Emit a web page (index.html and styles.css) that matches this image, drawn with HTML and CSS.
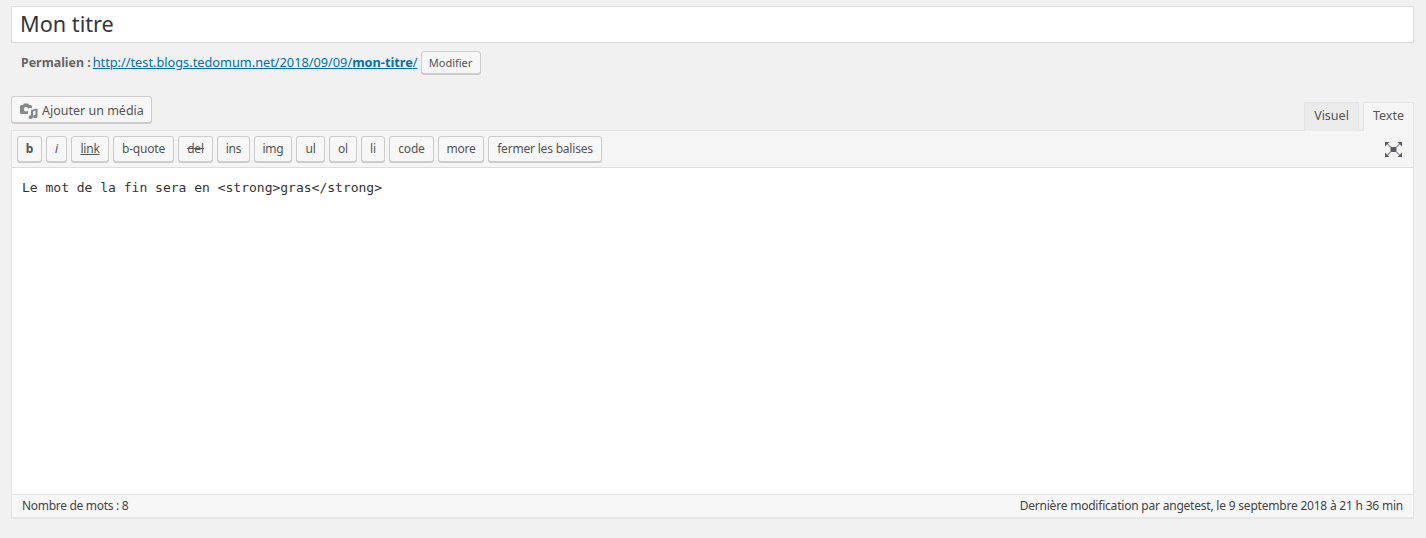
FILE: index.html
```html
<!DOCTYPE html>
<html lang="fr">
<head>
<meta charset="utf-8">
<title>Modifier l'article</title>
<link rel="stylesheet" href="styles.css">
</head>
<body>
<div class="title-box">Mon titre</div>
<div class="permalink">
  <strong class="perma-label">Permalien :</strong>
  <a class="perma-link" href="#">http://test.blogs.tedomum.net/2018/09/09/<b>mon-titre</b>/</a>
  <button class="btn btn-small">Modifier</button>
</div>
<div class="editor-head">
  <button class="btn btn-media">
    <svg class="media-icon" viewBox="0 0 18 16" width="18" height="16"><path fill="#82878c" d="M1.500 2H3l1-1.500h4L9 2h1.500A1.500 1.500 0 0 1 12 3.500V5H9.500A1.500 1.500 0 0 0 8 6.500V11H1.500A1.500 1.500 0 0 1 0 9.500v-6A1.500 1.500 0 0 1 1.500 2zM6 4a2.200 2.200 0 1 0 0 4.400A2.200 2.200 0 0 0 6 4z"/><path fill="#82878c" d="M11 7l6.500-1.500v8a2.200 1.800 0 1 1-2-1.800V7.800l-2.500.6v5.700a2.200 1.800 0 1 1-2-1.800z"/></svg>
    Ajouter un média
  </button>
  <div class="tabs">
    <span class="tab tab-visual">Visuel</span>
    <span class="tab tab-active">Texte</span>
  </div>
</div>
<div class="editor">
  <div class="toolbar">
    <button class="btn qt qt-b">b</button>
    <button class="btn qt qt-i">i</button>
    <button class="btn qt qt-link">link</button>
    <button class="btn qt qt-quote">b-quote</button>
    <button class="btn qt qt-del">del</button>
    <button class="btn qt qt-ins">ins</button>
    <button class="btn qt qt-img">img</button>
    <button class="btn qt qt-ul">ul</button>
    <button class="btn qt qt-ol">ol</button>
    <button class="btn qt qt-li">li</button>
    <button class="btn qt qt-code">code</button>
    <button class="btn qt qt-more">more</button>
    <button class="btn qt qt-close">fermer les balises</button>
    <svg class="fullscreen" viewBox="0 0 17 15" width="17" height="15"><rect x="5.500" y="5" width="6" height="5" fill="#555d66"/><path stroke="#555d66" stroke-width="1" fill="none" d="M2 1.500l3.500 3.500M15 1.500L11.500 5M2 13.500L5.500 10M15 13.500L11.500 10"/><path fill="#555d66" d="M0 0h4.500L0 4.500zM17 0v4.500L12.500 0zM0 15v-4.500L4.500 15zM17 15h-4.500l4.500-4.500z"/></svg>
  </div>
  <div class="content">Le mot de la fin sera en &lt;strong&gt;gras&lt;/strong&gt;</div>
  <div class="status">
    <span class="word-count">Nombre de mots : 8</span>
    <span>Dernière modification par angetest, le 9 septembre 2018 à 21 h 36 min</span>
  </div>
</div>
</body>
</html>
```
FILE: styles.css
```css
* { box-sizing: border-box; }
html, body { height: 100%; }
body {
  margin: 0;
  padding: 6px 12px 0 11px;
  background: #f1f1f1;
  color: #444;
  font-family: "Noto Sans", sans-serif;
  font-size: 13px;
  overflow: hidden;
}
.title-box {
  height: 37px;
  background: #fff;
  border: 1px solid #ddd;
  padding: 0 8px;
  font-size: 21.700px;
  line-height: 33px;
  color: #32373c;
}
.permalink {
  display: flex;
  align-items: center;
  height: 26px;
  margin-top: 6px;
  padding-left: 10px;
  font-size: 12.760px;
  color: #666;
}
.perma-label { margin-right: 2px; font-size: 12.400px; }
.perma-link { color: #0073aa; margin-right: 3px; }
.btn {
  display: inline-flex;
  align-items: center;
  justify-content: center;
  font-family: inherit;
  color: #555;
  background: #f7f7f7;
  border: 1px solid #ccc;
  border-radius: 3px;
  box-shadow: 0 1px 0 #ccc;
  padding: 0;
  white-space: nowrap;
}
.btn-small { width: 60px; height: 23px; font-size: 11px; }
.editor-head {
  display: flex;
  justify-content: space-between;
  align-items: flex-end;
  height: 48px;
  margin-top: 7px;
}
.btn-media {
  width: 141px;
  height: 27px;
  margin-bottom: 7px;
  font-size: 12.500px;
  justify-content: flex-start;
  padding: 1px 0 0 8px;
}
.media-icon { margin: 1px 4px 0 0; }
.tabs { display: flex; gap: 4px; margin-bottom: -1px; position: relative; z-index: 1; }
.tab {
  height: 29px;
  display: flex;
  align-items: center;
  justify-content: center;
  padding-bottom: 3px;
  border: 1px solid #e5e5e5;
  border-bottom: 0;
  font-size: 12.500px;
  color: #555;
}
.tab-visual { width: 55px; background: #ebebeb; }
.tab-active { width: 51px; background: #f5f5f5; }
.editor {
  border: 1px solid #e5e5e5;
  background: #fff;
  box-shadow: 0 1px 1px rgba(0,0,0,.04);
  width: 1403px;
}
.toolbar {
  display: flex;
  align-items: flex-start;
  gap: 4px;
  height: 37px;
  padding: 5px 5px 0;
  background: #f5f5f5;
  border-bottom: 1px solid #ddd;
}
.qt { height: 26px; padding-bottom: 2px; font-size: 12px; letter-spacing: -.2px; }
.qt-b { width: 25px; font-weight: 700; }
.qt-i { width: 21px; font-style: italic; }
.qt-link { width: 38px; text-decoration: underline; }
.qt-quote { width: 61px; }
.qt-del { width: 35px; text-decoration: line-through; }
.qt-ins { width: 33px; }
.qt-img { width: 38px; }
.qt-ul { width: 29px; }
.qt-ol { width: 28px; }
.qt-li { width: 24px; }
.qt-code { width: 45px; }
.qt-more { width: 46px; }
.qt-close { width: 114px; }
.fullscreen { margin: 6px 6px 0 auto; }
.content {
  height: 326px;
  padding: 11px 10px;
  font-family: "DejaVu Sans Mono", monospace;
  font-size: 13px;
  line-height: 18px;
  color: #333;
  background: #fff;
}
.status {
  display: flex;
  justify-content: space-between;
  align-items: center;
  height: 23px;
  padding: 0 10px 1px;
  background: #f7f7f7;
  border-top: 1px solid #e5e5e5;
  font-size: 12px;
  letter-spacing: -.21px;
  color: #444;
}
.word-count { letter-spacing: -.3px; }
```
